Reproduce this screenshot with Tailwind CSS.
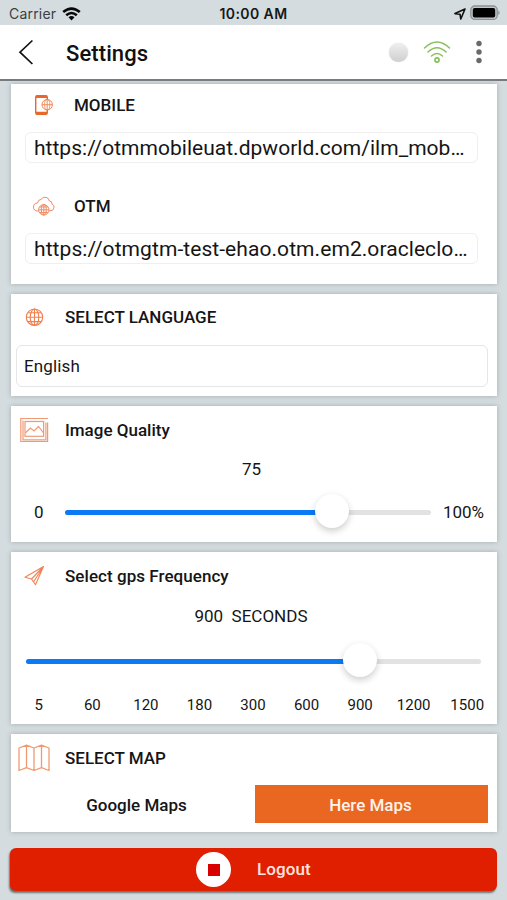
<!DOCTYPE html>
<html lang="en">
<head>
<meta charset="utf-8">
<title>Settings</title>
<script src="https://cdn.jsdelivr.net/npm/@tailwindcss/browser@4"></script>
</head>
<body class="bg-[#d4dce0]">
<div class="w-[507px] h-[900px] overflow-hidden flex flex-col bg-[#d4dce0] font-[Roboto,sans-serif] text-[17px] text-[#151515] whitespace-nowrap">
  <header class="h-[25px] shrink-0 grid grid-cols-3 items-center pl-[9px] pr-[7px] pt-[2px]">
    <div class="flex items-center gap-[6px] font-[Inter,sans-serif] text-[14px] text-[#3a3f42]">
      <span class="tracking-[0.2px]">Carrier</span>
      <svg class="w-[19px] h-[14px]" viewBox="0 0 19 14" fill="none" stroke="#080808" stroke-width="2.6"><path d="M1.2 5.1Q9.5-2 17.8 5.1M4.2 8.3Q9.5 3.7 14.8 8.3"/><path d="M6.5 10.2Q9.5 7.7 12.5 10.2L9.5 13.4Z" fill="#080808" stroke="none"/></svg>
    </div>
    <div class="text-center pr-[2px] font-[Inter,sans-serif] font-semibold text-[14px] tracking-[0.4px] text-[#161819]">10:00 AM</div>
    <div class="flex items-center justify-end gap-[4px]">
      <svg class="w-[12px] h-[12px]" viewBox="0 0 12 12" fill="none" stroke="#111" stroke-width="1.6" stroke-linejoin="round"><path d="M11 1L1 5.6L6 6.2L6.8 11Z"/></svg>
      <svg class="w-[31px] h-[16px] -mt-[1px] mr-[-1px]" viewBox="0 0 31 16"><rect x=".8" y="1" width="26.4" height="13.4" rx="4" fill="#c2c7c8" stroke="#8c9192" stroke-width="1.3"/><rect x="2.8" y="3" width="22.4" height="9.6" rx="1.8" fill="#000"/><path d="M28.3 5.2Q31 7.7 28.3 10.2Z" fill="#8c9192"/></svg>
    </div>
  </header>
  <nav class="h-[56px] shrink-0 flex items-center bg-white border-b-2 border-[#77797b] pl-[18px] pr-[25px]">
    <svg class="w-[16px] h-[26px]" viewBox="0 0 16 26" fill="none" stroke="#111" stroke-width="1.7"><path d="M14.4 1.5L2 13.2L14.4 25"/></svg>
    <h1 class="ml-[32px] mt-[2px] text-[22px] font-medium text-[#111] tracking-[0.1px]">Settings</h1>
    <div class="ml-auto flex items-center">
      <span class="w-[19px] h-[19px] rounded-full bg-linear-to-b from-[#efefef] to-[#cfcfcf] shadow-[0_0_1px_#bbb]"></span>
      <svg class="ml-[15px] w-[28px] h-[24px]" viewBox="0 0 28 24" fill="none" stroke="#86c05a" stroke-width="1.5" stroke-linecap="round"><path d="M1.5 8Q14-4 26.5 8M5 12Q14 3.4 23 12M8.5 16Q14 11 19.5 16"/><circle cx="14" cy="20" r="2.1" stroke-width="1.6"/></svg>
      <svg class="ml-[25px] w-[6px] h-[24px]" viewBox="0 0 6 24" fill="#68696b"><circle cx="3" cy="3.5" r="2.7"/><circle cx="3" cy="12" r="2.7"/><circle cx="3" cy="20.5" r="2.7"/></svg>
    </div>
  </nav>
  <main class="mt-[3px] pl-[11px] pr-[10px] flex flex-col gap-[10px]">
    <section class="h-[200px] bg-white shadow-[0_0_5px_#a3abab] pl-[14px] pr-[19px] flex flex-col">
      <div class="h-[42px] flex items-center pl-[9px]">
        <svg class="w-[20px] h-[22px]" viewBox="0 0 20 22" fill="none" stroke="#e8682c"><rect x="1.7" y="1.7" width="11.6" height="18.6" rx="1.5" stroke-width="1.4"/><path d="M2 2.8h11M2 19h11" stroke-width="2.6"/><circle cx="13.2" cy="10.7" r="5.2" fill="#fff" stroke="#ee8450" stroke-width="1"/><path d="M8 10.7h10.6M13.2 5.3v10.8" stroke="#ee8450" stroke-width=".9"/><ellipse cx="13.2" cy="10.7" rx="2.6" ry="5.2" stroke="#ee8450" stroke-width=".8"/></svg>
        <h2 class="ml-[20px] mt-[2px] font-medium">MOBILE</h2>
      </div>
      <div class="mt-[6px] h-[31px] rounded-[6px] border border-[#efefef] flex items-center pl-[8px] pt-[2px] text-[21px] tracking-[0.02px]">https://otmmobileuat.dpworld.com/ilm_mob…</div>
      <div class="mt-[22px] h-[42px] flex items-center pl-[8px]">
        <svg class="w-[22px] h-[20px]" viewBox="0 0 22 20" fill="none" stroke="#ef8b62" stroke-width="1"><path d="M6 15H4.6A4 4 0 0 1 4.5 7Q5 3.5 8 3.5Q10 .5 13 1.3Q16 2 16.3 5Q19 4.8 19 8Q21.5 9 21 12Q20.5 15 16 15"/><circle cx="10.8" cy="13.8" r="5.2" fill="#fff"/><path d="M5.6 13.8H16M10.8 8.6V19M6.5 11h8.6M6.5 16.6h8.6"/><ellipse cx="10.8" cy="13.8" rx="2.5" ry="5.2"/></svg>
        <h2 class="ml-[19px] mt-px font-medium">OTM</h2>
      </div>
      <div class="mt-[6px] h-[31px] rounded-[6px] border border-[#efefef] flex items-center pl-[8px] pt-[2px] text-[21px] tracking-[0.07px]">https://otmgtm-test-ehao.otm.em2.oracleclo…</div>
    </section>
    <section class="h-[102px] bg-white shadow-[0_0_5px_#a3abab] pl-[5px] pr-[9px]">
      <div class="h-[47px] flex items-center pl-[9px]">
        <svg class="w-[19px] h-[19px]" viewBox="0 0 19 19" fill="none" stroke="#ef8050" stroke-width="1.1"><circle cx="9.5" cy="9.2" r="8.2"/><ellipse cx="9.5" cy="9.2" rx="4.3" ry="8.2"/><path d="M1.2 9.2h16.6M9.5 1v16.4M3 4.8h13M3 13.6h13"/></svg>
        <h2 class="ml-[21px] mt-px font-medium">SELECT LANGUAGE</h2>
      </div>
      <div class="mt-[4px] h-[42px] rounded-[6px] border border-[#e6e6e6] flex items-center pl-[7px] pt-px tracking-[0.15px]">English</div>
    </section>
    <section class="h-[136px] bg-white shadow-[0_0_5px_#a3abab]">
      <div class="h-[47px] flex items-center pl-[9px]">
        <svg class="w-[29px] h-[26px]" viewBox="0 0 29 26" fill="none" stroke="#f09a75" stroke-width="1.2"><path d="M28 1.5H.8V24.5H27.6V5.5M25.9 5.5V22.8H3V3.5"/><rect x="5" y="4.5" width="18.6" height="14.8"/><path d="M5.5 15.8L10.5 11L14 14L18.5 9.5L23.5 16" stroke-width="1.2"/></svg>
        <h2 class="ml-[16px] mt-[2px] font-medium">Image Quality</h2>
      </div>
      <div class="h-[34px] flex items-center justify-center pr-[5px]">75</div>
      <div class="h-[50px] flex items-center pl-[23px] pr-[13px]">
        <span class="w-[31px] pt-px">0</span>
        <div class="relative w-[366px] h-[5px] rounded-full bg-[#e2e2e2]">
          <div class="h-full rounded-full bg-[#0a7af5]" style="width:73%"></div>
          <div class="absolute left-[250px] top-[-16px] size-[34px] rounded-full bg-white shadow-[0_3px_7px_rgba(0,0,0,0.2)]"></div>
        </div>
        <span class="ml-auto pt-px">100%</span>
      </div>
    </section>
    <section class="h-[172px] bg-white shadow-[0_0_5px_#a3abab]">
      <div class="h-[47px] flex items-center pl-[13px]">
        <svg class="w-[21px] h-[21px]" viewBox="0 0 21 21" fill="none" stroke="#ef8358" stroke-width="1.1" stroke-linejoin="round"><path d="M19.5 1.5L1 12.2L7.5 14L11.5 19.8L19.5 1.5L7.5 14M19.5 1.5L9.6 16.8"/></svg>
        <h2 class="ml-[20px] mt-[2px] font-medium tracking-[0.05px]">Select gps Frequency</h2>
      </div>
      <div class="h-[34px] flex items-center justify-center pr-[6px] pt-px whitespace-pre">900  SECONDS</div>
      <div class="h-[56px] flex items-center pl-[15px] pr-[16px]">
        <div class="relative w-full h-[5px] rounded-full bg-[#e2e2e2]">
          <div class="h-full rounded-full bg-[#0a7af5]" style="width:73%"></div>
          <div class="absolute left-[317px] top-[-16px] size-[34px] rounded-full bg-white shadow-[0_3px_7px_rgba(0,0,0,0.2)]"></div>
        </div>
      </div>
      <div class="h-[32px] grid grid-cols-9 items-center text-center text-[15px] ml-[1px] mr-[3px] pt-px">
        <span>5</span><span>60</span><span>120</span><span>180</span><span>300</span><span>600</span><span>900</span><span>1200</span><span>1500</span>
      </div>
    </section>
    <section class="h-[98px] bg-white shadow-[0_0_5px_#a3abab] pr-[9px]">
      <div class="h-[47px] flex items-center pl-[7px]">
        <svg class="w-[32px] h-[28px]" viewBox="0 0 32 28" fill="none" stroke="#f09a72" stroke-width="1.3" stroke-linejoin="round"><path d="M1 4L8.5 1.2L16 4L23.5 1.2L31 4V26.5L23.5 23.6L16 26.5L8.5 23.6L1 26.5ZM8.5 1.2V23.6M16 4V26M23.5 1.2V23.6"/></svg>
        <h2 class="ml-[15px] mt-[2px] font-medium">SELECT MAP</h2>
      </div>
      <div class="mt-[4px] h-[38px] flex font-medium">
        <div class="w-[244px] flex items-center justify-center pl-[7px] pt-[3px]">Google Maps</div>
        <div class="flex-1 flex items-center justify-center pt-[3px] pr-[2px] bg-[#ea6722] text-[#fff3eb]">Here Maps</div>
      </div>
    </section>
  </main>
  <button class="mt-[16px] ml-[10px] w-[487px] h-[43px] shrink-0 rounded-[6px] bg-[#df1f00] shadow-[-1px_2px_2px_#6c7073] flex items-center pl-[186px] font-medium text-[#ffe4dc]">
    <span class="size-[35px] rounded-full bg-white flex items-center justify-center"><span class="size-[12px] bg-[#d90000]"></span></span>
    <span class="ml-[26px] mt-px tracking-[0.1px]">Logout</span>
  </button>
</div>
</body>
</html>
